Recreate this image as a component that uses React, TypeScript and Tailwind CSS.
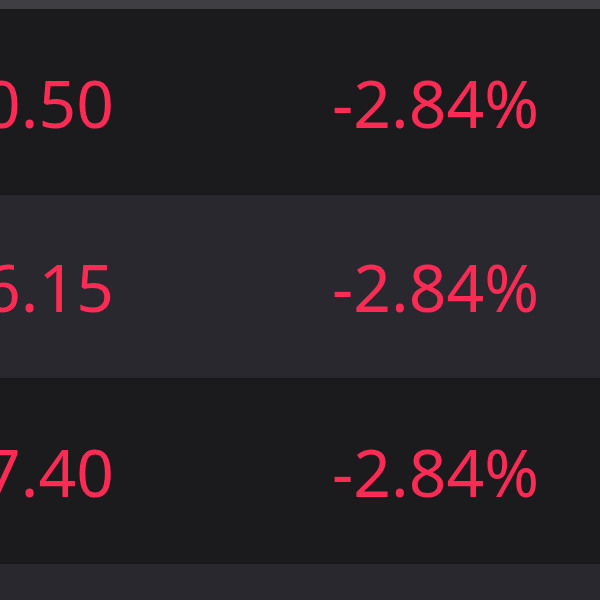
const rows = [
  { price: "130.50", change: "-2.84%", bg: "bg-[#1b1b1d]" },
  { price: "126.15", change: "-2.84%", bg: "bg-[#29282e]" },
  { price: "127.40", change: "-2.84%", bg: "bg-[#1b1b1d]" },
];

export default function App() {
  return (
    <div
      className="h-[600px] w-[600px] overflow-hidden bg-[#29282e]"
      style={{ fontFamily: '"Noto Sans", sans-serif' }}
    >
      {/* previous row peeking in at the top */}
      <div className="h-[9px] bg-[#3f3f43]" />

      {rows.map((r, i) => (
        <div
          key={i}
          className={`flex h-[184.5px] items-center border-t border-[#18171b] ${r.bg} text-[66px] leading-none text-[#fe2c55]`}
        >
          <div className="flex w-[114px] shrink-0 justify-end whitespace-nowrap">{r.price}</div>
          <div className="flex w-[425px] shrink-0 justify-end whitespace-nowrap">{r.change}</div>
        </div>
      ))}

      <div className="h-[40px] border-t border-[#18171b] bg-[#29282e]" />
    </div>
  );
}
